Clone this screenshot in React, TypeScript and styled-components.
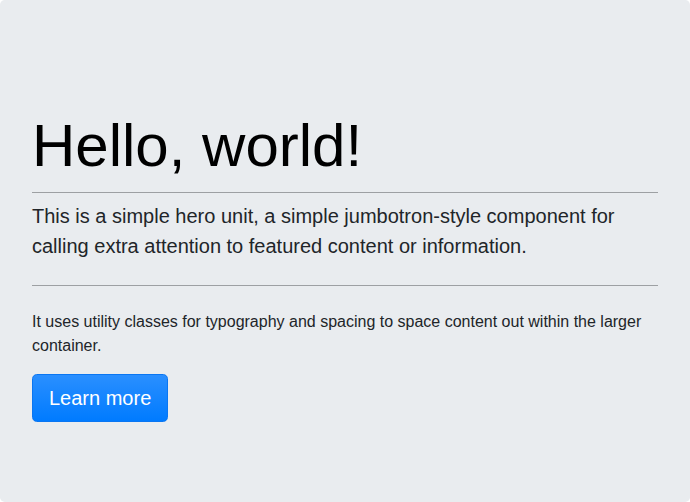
import React from 'react'
import styled, { createGlobalStyle } from 'styled-components'

const GlobalStyle = createGlobalStyle`
  html, body {
    margin: 0;
    padding: 0;
    background: #ffffff;
  }
  body {
    font-family: 'Liberation Sans', Arial, sans-serif;
    color: #212529;
  }
`

const Jumbotron = styled.section`
  box-sizing: border-box;
  width: 100%;
  min-height: 502px;
  padding: 110px 32px 80px;
  background: #e9ecef;
  border-radius: 4.8px;
`

const Display = styled.h1`
  margin: 0 0 10px;
  font-size: 60px;
  font-weight: 300;
  line-height: 72px;
  color: #000000;
`

const Divider = styled.hr<{ $gap: number }>`
  margin: 0 0 ${({ $gap }) => $gap}px;
  border: 0;
  border-top: 1px solid #9da0a3;
`

const Lead = styled.p`
  margin: 0 0 24px;
  font-size: 20px;
  font-weight: 300;
  line-height: 30px;
`

const Body = styled.p`
  margin: 0 0 16px;
  font-size: 16px;
  line-height: 24px;
`

const Button = styled.a`
  display: inline-block;
  padding: 8px 16px;
  font-size: 20px;
  line-height: 30px;
  color: #ffffff;
  text-decoration: none;
  background: linear-gradient(180deg, #2a8fff 0%, #007bff 100%);
  border: 1px solid #0a76f2;
  border-radius: 4.8px;
  cursor: pointer;
`

export default function App(): JSX.Element {
  return (
    <>
      <GlobalStyle />
      <Jumbotron>
        <Display>Hello, world!</Display>
        <Divider $gap={8} />
        <Lead>
          This is a simple hero unit, a simple jumbotron-style component for calling extra attention to featured content
          or information.
        </Lead>
        <Divider $gap={24} />
        <Body>It uses utility classes for typography and spacing to space content out within the larger container.</Body>
        <Button href="#" role="button">
          Learn more
        </Button>
      </Jumbotron>
    </>
  )
}
